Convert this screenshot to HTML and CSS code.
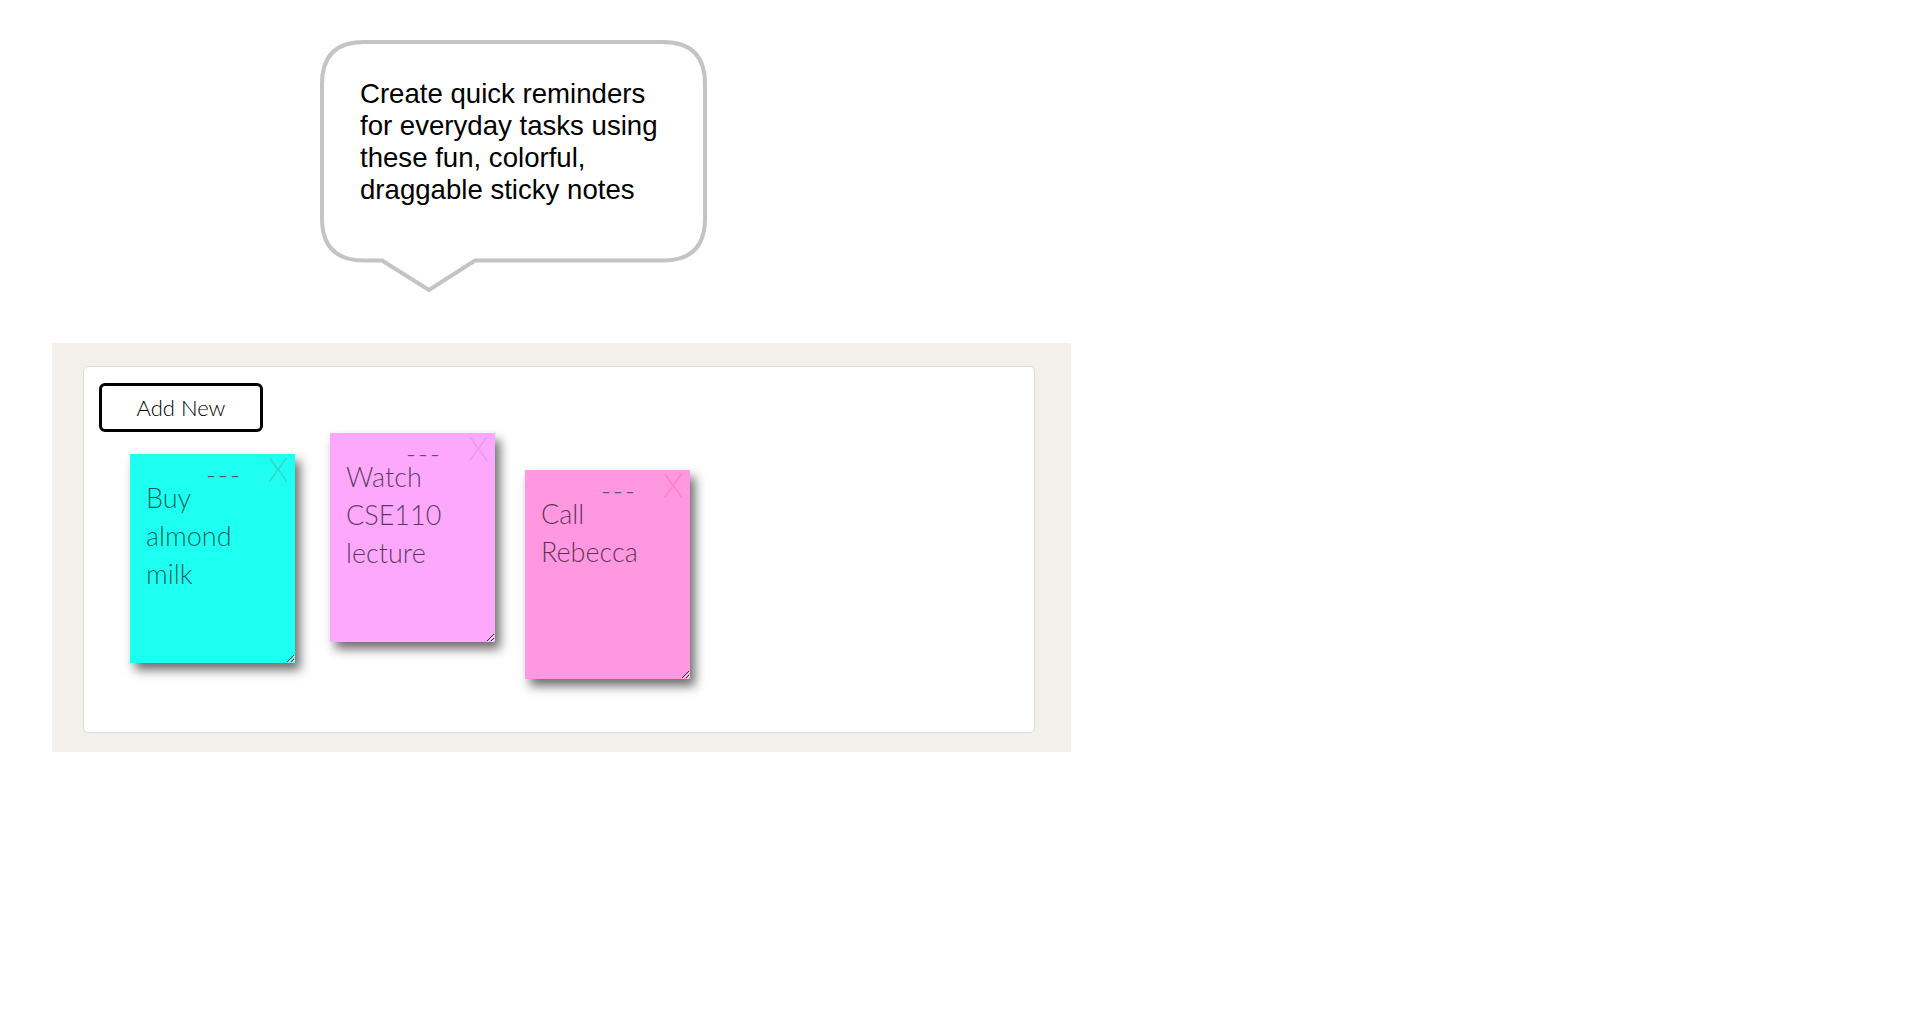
FILE: index.html
```html
<!DOCTYPE html>
<html lang="en">
<head>
<meta charset="utf-8">
<title>Sticky Notes</title>
<link rel="stylesheet" href="styles.css">
</head>
<body>
<div class="intro">
  <svg class="bubble" width="400" height="265" viewBox="0 0 400 265" aria-hidden="true">
    <path d="M50 8 H349 Q391 8 391 50 V184.5 Q391 226.5 349 226.5 H161 L115 256 L68 226.5 H50 Q8 226.5 8 184.5 V50 Q8 8 50 8 Z" fill="#fff" stroke="#c4c4c4" stroke-width="4" stroke-linejoin="round"/>
  </svg>
  <p class="bubble-text">Create quick reminders<br>for everyday tasks using<br>these fun, colorful,<br>draggable sticky notes</p>
</div>

<section class="board">
  <div class="canvas">
    <button class="add-btn" type="button">Add New</button>

    <div class="note note-cyan" style="left:46px;top:87px">
      <span class="note-grab">---</span>
      <span class="note-close">X</span>
      <div class="note-text">Buy almond milk</div>
      <svg class="grip" width="10" height="10" viewBox="0 0 10 10" aria-hidden="true"><path d="M9 2 L2 9 M9 6 L6 9" stroke="#333" stroke-width="1"/><path d="M10 3 L3 10 M10 7 L7 10" stroke="#fff" stroke-width="1"/></svg>
    </div>

    <div class="note note-violet" style="left:246px;top:66px">
      <span class="note-grab">---</span>
      <span class="note-close">X</span>
      <div class="note-text">Watch CSE110 lecture</div>
      <svg class="grip" width="10" height="10" viewBox="0 0 10 10" aria-hidden="true"><path d="M9 2 L2 9 M9 6 L6 9" stroke="#333" stroke-width="1"/><path d="M10 3 L3 10 M10 7 L7 10" stroke="#fff" stroke-width="1"/></svg>
    </div>

    <div class="note note-pink" style="left:441px;top:103px">
      <span class="note-grab">---</span>
      <span class="note-close">X</span>
      <div class="note-text">Call Rebecca</div>
      <svg class="grip" width="10" height="10" viewBox="0 0 10 10" aria-hidden="true"><path d="M9 2 L2 9 M9 6 L6 9" stroke="#333" stroke-width="1"/><path d="M10 3 L3 10 M10 7 L7 10" stroke="#fff" stroke-width="1"/></svg>
    </div>
  </div>
</section>
</body>
</html>
```

FILE: styles.css
```css
html, body {
  margin: 0;
  padding: 0;
  background: #ffffff;
}

body {
  font-family: "Liberation Sans", Arial, sans-serif;
}

.intro {
  position: relative;
  width: 400px;
  height: 265px;
  margin: 34px 0 0 314px;
}

.bubble {
  position: absolute;
  left: 0;
  top: 0;
}

.bubble-text {
  position: relative;
  margin: 0;
  padding: 44px 0 0 46px;
  font-family: "Liberation Sans", Arial, sans-serif;
  font-size: 27.6px;
  line-height: 32px;
  color: #000;
}

.board {
  box-sizing: border-box;
  width: 1019px;
  height: 409px;
  margin: 44px 0 0 52px;
  padding: 23px 36px 19px 31px;
  background: #f3f0ec;
}

.canvas {
  position: relative;
  box-sizing: border-box;
  height: 100%;
  padding: 16px 15px;
  background: #fff;
  border: 1px solid #dcdcdc;
  border-radius: 5px;
}

.add-btn {
  display: block;
  box-sizing: border-box;
  width: 164px;
  height: 49px;
  margin: 0;
  padding: 0;
  background: #fff;
  border: 3px solid #000;
  border-radius: 6px;
  font-family: Lato, "Open Sans", sans-serif;
  font-weight: 300;
  font-size: 22px;
  color: #000;
}

.note {
  position: absolute;
  box-sizing: border-box;
  width: 165px;
  height: 209px;
  box-shadow: 5px 7px 10px rgba(33, 33, 33, 0.65);
  font-family: Lato, "Open Sans", sans-serif;
  font-weight: 300;
}

.note-cyan { background: #1dfff1; }
.note-violet { background: #fda8fd; }
.note-pink { background: #ff97e1; }

.note-grab {
  position: absolute;
  left: 76px;
  top: 7px;
  font-size: 27px;
  line-height: 27px;
  letter-spacing: 2px;
  color: #555;
}

.note-close {
  position: absolute;
  left: 138px;
  top: -1px;
  font-size: 33px;
  line-height: 33px;
}

.note-cyan .note-close { color: #34d8cd; }
.note-violet .note-close { color: #e79bf3; }
.note-pink .note-close { color: #ff83c1; }

.note-text {
  width: 120px;
  padding: 25px 0 0 16px;
  font-size: 27px;
  line-height: 38px;
  color: rgba(0, 0, 0, 0.66);
}

.grip {
  position: absolute;
  right: 0;
  bottom: 0;
}
```
